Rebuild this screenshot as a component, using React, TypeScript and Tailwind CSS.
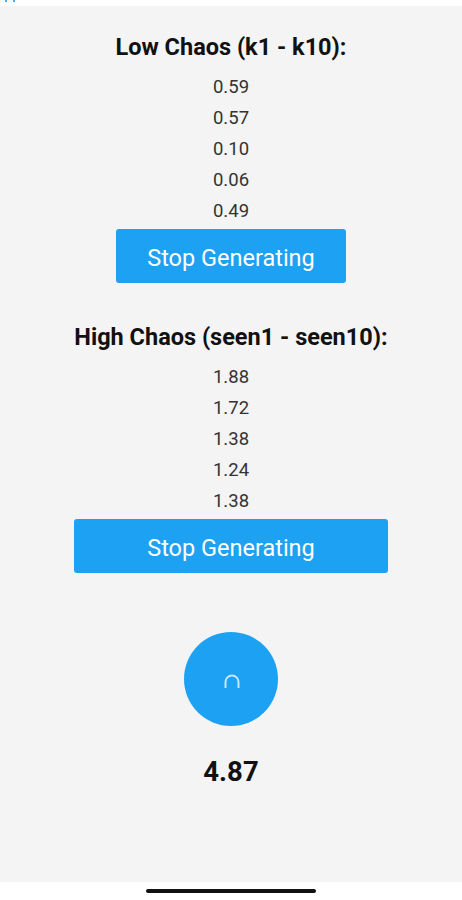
import React from "react";

const lowChaos = ["0.59", "0.57", "0.10", "0.06", "0.49"];
const highChaos = ["1.88", "1.72", "1.38", "1.24", "1.38"];

function Section({ title, values, className }: { title: string; values: string[]; className?: string }) {
  return (
    <div className={"flex w-fit flex-col items-stretch " + (className ?? "")}>
      <h2 className="text-center text-[23.5px] font-bold leading-[24px] text-[#111]">{title}</h2>
      <div className="mt-[12.5px] flex flex-col">
        {values.map((v, i) => (
          <p key={i} className="text-center text-[18.5px] leading-[31px] text-[#333]">
            {v}
          </p>
        ))}
      </div>
      <button className="mt-[2.5px] h-[54px] rounded-[3px] bg-[#1da1f2] pt-[6px] text-[23.5px] text-white">
        Stop Generating
      </button>
    </div>
  );
}

export default function App() {
  return (
    <div className="flex h-[900px] w-full flex-col bg-white font-['Roboto',sans-serif]">
      <div className="relative h-[6px] bg-white">
        <div className="absolute left-[5px] top-0 h-[2px] w-[2px] bg-[#4aa8e8]" />
        <div className="absolute left-[13px] top-0 h-[2px] w-[2px] bg-[#4aa8e8]" />
      </div>
      <div className="flex flex-1 flex-col items-center bg-[#f4f4f4] pt-[29px]">
        <Section title="Low Chaos (k1 - k10):" values={lowChaos} />
        <Section title="High Chaos (seen1 - seen10):" values={highChaos} className="mt-[42px]" />
        <button className="mt-[59px] flex h-[94px] w-[94px] items-center justify-center rounded-full bg-[#1da1f2] pt-[4px] pl-[1px]">
          <svg width="18" height="14" viewBox="0 0 18 14" fill="none">
            <path d="M2.5 14 V8 A6.5 6.5 0 0 1 15.5 8 V14" stroke="#c6e6fb" strokeWidth="2" />
          </svg>
        </button>
        <p className="mt-[31px] text-[27.5px] font-bold leading-[30px] text-[#111]">4.87</p>
      </div>
      <div className="flex h-[18px] items-center justify-center bg-white">
        <div className="h-[4px] w-[170px] rounded-full bg-[#111]" />
      </div>
    </div>
  );
}
